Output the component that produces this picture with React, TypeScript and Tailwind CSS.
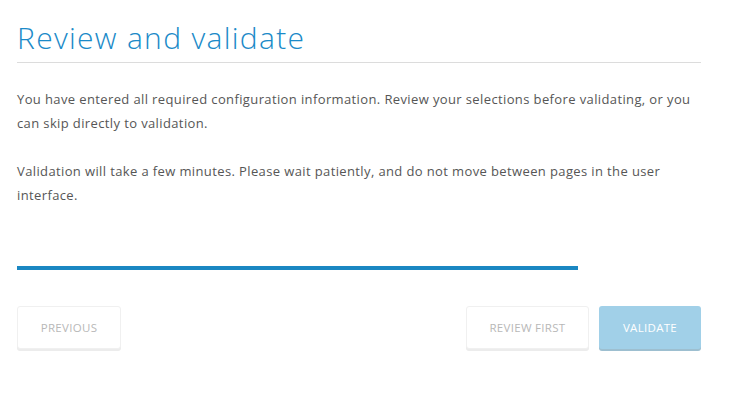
export default function App() {
  return (
    <div className="w-[747px] h-[405px] bg-white px-[17px] pt-[19px] font-['Open_Sans',sans-serif]">
      <div className="w-[684px]">
        <h1 className="text-[30px] leading-[38px] font-light tracking-[1.3px] text-[#1b8ac8]">
          Review and validate
        </h1>
        <div className="mt-[5px] h-px bg-[#dcdcdc]" />
        <p className="mt-[24px] whitespace-nowrap text-[13px] leading-[24px] tracking-[0.38px] text-[#565656]">
          You have entered all required configuration information. Review your selections before validating, or you
          <br />
          can skip directly to validation.
        </p>
        <p className="mt-[24px] whitespace-nowrap text-[13px] leading-[24px] tracking-[0.38px] text-[#565656]">
          Validation will take a few minutes. Please wait patiently, and do not move between pages in the user
          <br />
          interface.
        </p>
        <div className="mt-[59px] h-[4px] w-[561px] bg-[#1a87c2]" />
        <div className="mt-[36px] flex items-start">
          <button className="h-[43px] w-[104px] rounded-[3px] border border-[#f0f0f0] bg-white text-[11.5px] uppercase tracking-[0.3px] text-[#b8b8b8] shadow-[0_2px_0_#ececec]">
            Previous
          </button>
          <div className="ml-auto flex gap-[10px]">
            <button className="h-[43px] w-[123px] rounded-[3px] border border-[#f0f0f0] bg-white text-[11.5px] uppercase tracking-[0.3px] text-[#b8b8b8] shadow-[0_2px_0_#ececec]">
              Review first
            </button>
            <button className="h-[43px] w-[102px] rounded-[3px] bg-[#a1d0e8] text-[11.5px] uppercase tracking-[0.3px] text-white shadow-[0_2px_0_#9dbfd0]">
              Validate
            </button>
          </div>
        </div>
      </div>
    </div>
  );
}
